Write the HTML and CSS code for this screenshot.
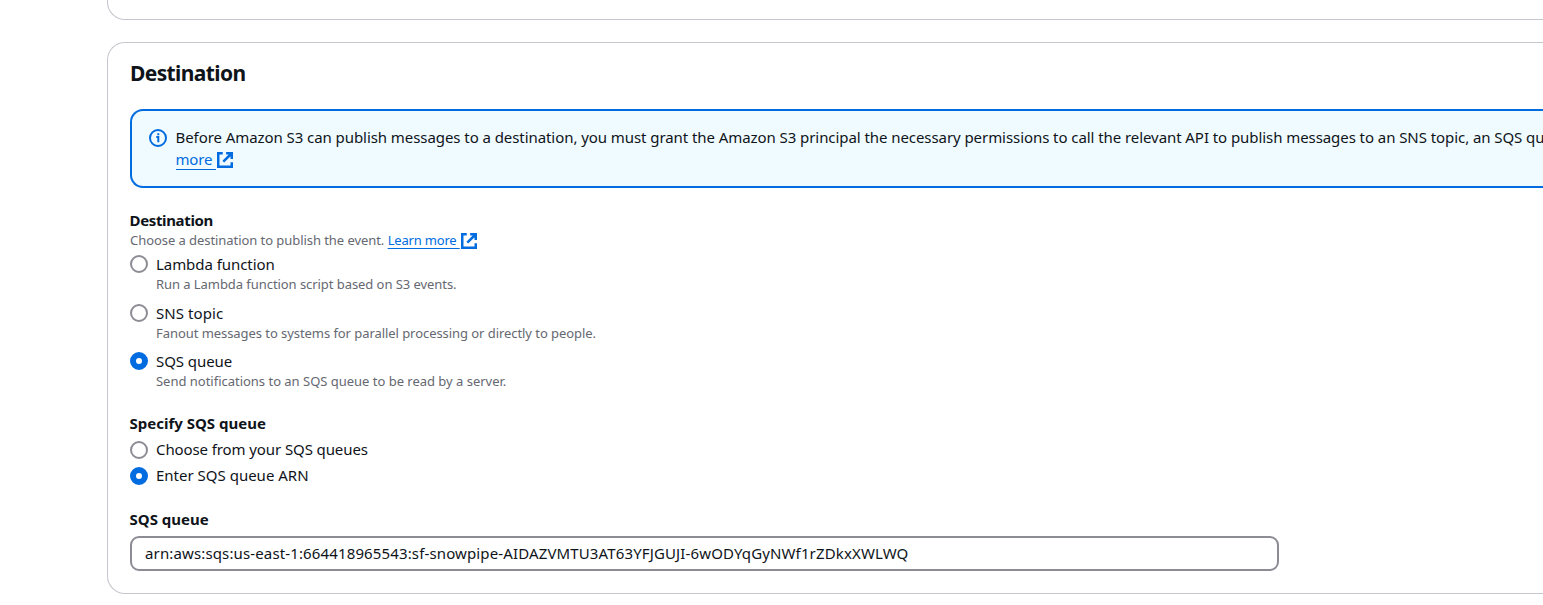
FILE: index.html
```html
<!DOCTYPE html>
<html lang="en">
<head>
<meta charset="utf-8">
<title>Destination</title>
<link rel="stylesheet" href="styles.css">
</head>
<body>
<section class="panel panel-prev"></section>
<section class="panel panel-main">
  <h2 class="title">Destination</h2>
  <div class="alert">
    <svg class="info" viewBox="0 0 18 18"><circle cx="9" cy="9" r="8"/><path d="M9.3 13.2V8H7.3M9.3 6.3V4.2"/></svg>
    <div class="alert-text">
      <p class="line">Before Amazon S3 can publish messages to a destination, you must grant the Amazon S3 principal the necessary permissions to call the relevant API to publish messages to an SNS topic, an SQS qu</p>
      <p class="more"><a class="link">more </a><svg class="ext" viewBox="0 0 16 16"><path d="M9 2h5v5M6.5 9.5 14 2M14 10v4H2V2h4"/></svg></p>
    </div>
  </div>
  <div class="field">
    <h3 class="label tight">Destination</h3>
    <p class="hint">Choose a destination to publish the event. <a class="link learn">Learn more </a><svg class="ext" viewBox="0 0 16 16"><path d="M9 2h5v5M6.5 9.5 14 2M14 10v4H2V2h4"/></svg></p>
    <div class="option"><span class="radio"></span><div><p class="name">Lambda function</p><p class="desc">Run a Lambda function script based on S3 events.</p></div></div>
    <div class="option"><span class="radio"></span><div><p class="name sns">SNS topic</p><p class="desc">Fanout messages to systems for parallel processing or directly to people.</p></div></div>
    <div class="option last"><span class="radio checked"></span><div><p class="name">SQS queue</p><p class="desc send">Send notifications to an SQS queue to be read by a server.</p></div></div>
  </div>
  <div class="field">
    <h3 class="label">Specify SQS queue</h3>
    <div class="choices">
      <div class="choice"><span class="radio"></span><p class="name choose">Choose from your SQS queues</p></div>
      <div class="choice"><span class="radio checked"></span><p class="name enter">Enter SQS queue ARN</p></div>
    </div>
  </div>
  <div class="field queue">
    <h3 class="label">SQS queue</h3>
    <div class="input">arn:aws:sqs:us-east-1:664418965543:sf-snowpipe-AIDAZVMTU3AT63YFJGUJI-6wODYqGyNWf1rZDkxXWLWQ</div>
  </div>
</section>
</body>
</html>
```
FILE: styles.css
```css
* { box-sizing: border-box; margin: 0; padding: 0; }
body { background: #fff; color: #0f141a; font: 15px/22px "Noto Sans", "Open Sans", sans-serif; height: 605px; overflow: hidden; }
.panel { margin-left: 107px; border: 1px solid #c6c6cd; border-right: 0; border-radius: 18px 0 0 18px; }
.panel-prev { height: 20px; border-top: 0; border-radius: 0 0 0 18px; }
.panel-main { margin-top: 22px; height: 552px; padding: 17px 0 0 22px; }
.title { font-size: 21px; line-height: 27px; font-weight: 700; letter-spacing: -0.62px; }
.alert { display: flex; margin-top: 22px; height: 79px; border: 2px solid #006ce0; border-right: 0; border-radius: 13px 0 0 13px; background: #f0fbff; padding: 15px 0 0 17px; overflow: hidden; }
.info { width: 18px; height: 18px; margin: 3px 8.5px 0 0; flex: none; fill: none; stroke: #006ce0; stroke-width: 2; }
.line { white-space: nowrap; letter-spacing: -0.068px; }
.link { color: #006ce0; border-bottom: 1px solid #006ce0; white-space: pre; }
.more .link { letter-spacing: -0.2px; }
.learn { letter-spacing: -0.18px; }
.ext { width: 18px; height: 18px; vertical-align: -4px; fill: none; stroke: #006ce0; stroke-width: 2.2; }
.hint .ext { vertical-align: -5px; }
.hint .link { border-bottom: 0; text-decoration: underline; text-decoration-thickness: 1px; text-underline-offset: 3px; }
.field { margin-top: 21px; }
.label { font-size: 15px; line-height: 22px; font-weight: 700; margin-left: -0.5px; }
.tight { letter-spacing: -0.35px; }
.hint, .desc { font-size: 13px; line-height: 18px; color: #656871; letter-spacing: -0.06px; }
.hint { height: 18px; margin-bottom: 4px; }
.desc.send { letter-spacing: -0.015px; }
.option { display: flex; height: 49px; }
.option:nth-child(4) { height: 48px; }
.option.last { height: 41px; }
.radio { width: 18px; height: 18px; margin: 2.4px 8.5px 0 -0.5px; border: 2px solid #8c8c94; border-radius: 50%; flex: none; }
.radio.checked { border: 6px solid #006ce0; }
.name { letter-spacing: -0.06px; }
.name.sns { letter-spacing: 0.08px; }
.name.choose { letter-spacing: -0.1px; }
.name.enter { letter-spacing: 0; }
.choices { display: grid; gap: 4px; margin-top: 4px; }
.choice { display: flex; height: 22px; }
.choice .radio { margin-top: 3px; }
.queue { margin-top: 22px; }
.input { width: 1149px; height: 35px; margin-top: 6px; border: 2px solid #8c8c94; border-radius: 9px; padding: 4px 13px; letter-spacing: 0.135px; }
```
